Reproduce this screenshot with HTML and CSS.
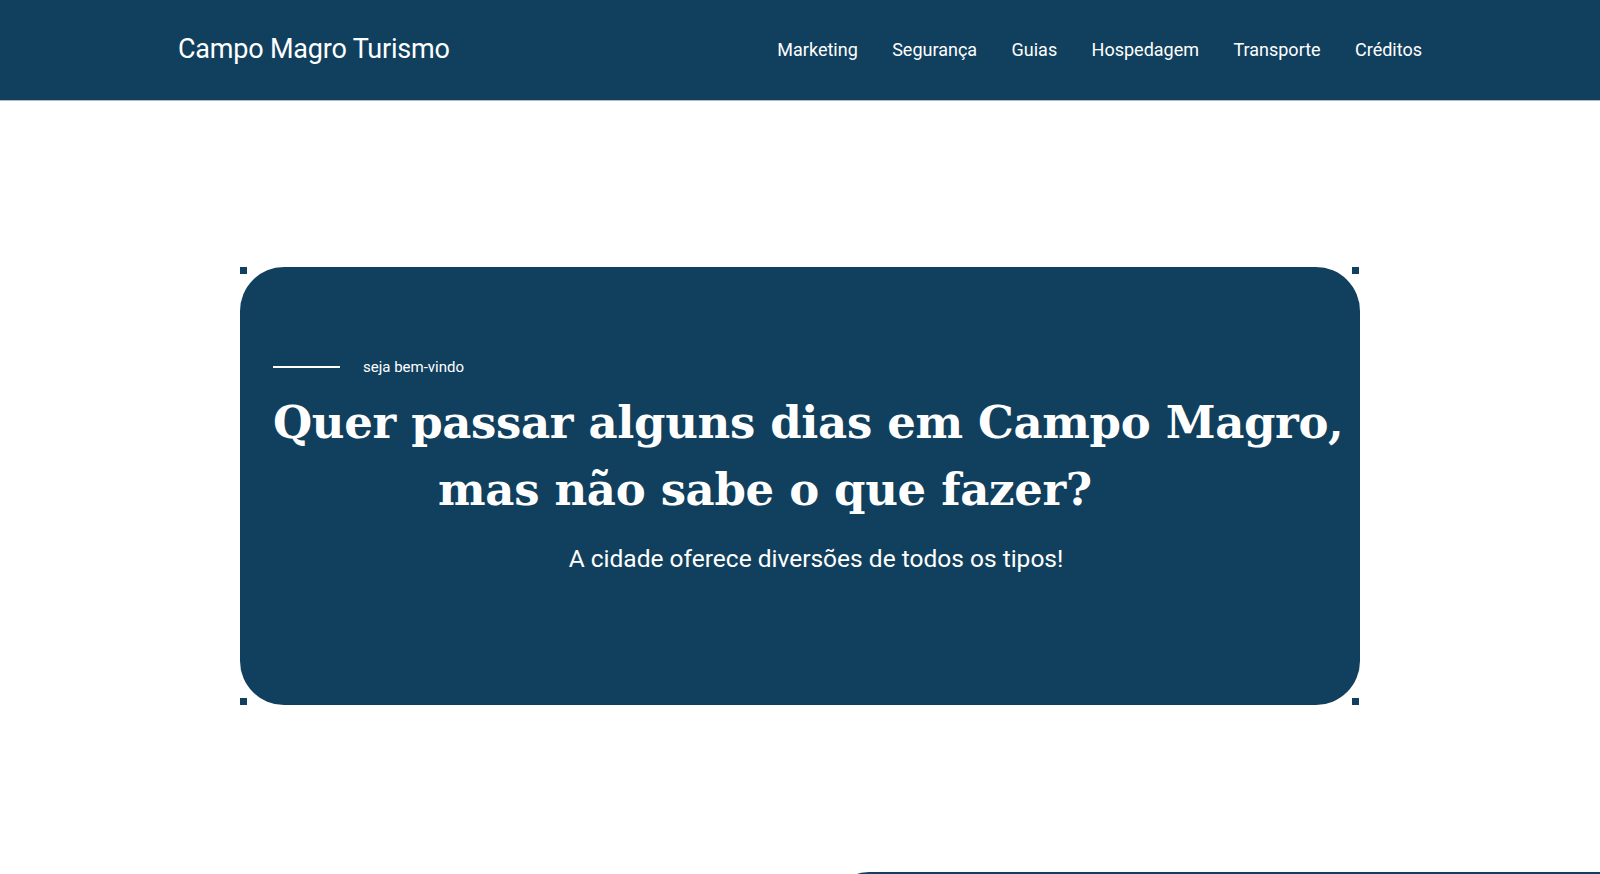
FILE: index.html
```html
<!DOCTYPE html>
<html lang="pt-BR">
<head>
<meta charset="utf-8">
<title>Campo Magro Turismo</title>
<link rel="stylesheet" href="styles.css">
</head>
<body>
<header class="site-header">
  <div class="header-inner">
    <a class="brand" href="#">Campo Magro Turismo</a>
    <nav class="main-nav">
      <a href="#">Marketing</a>
      <a href="#">Segurança</a>
      <a href="#">Guias</a>
      <a href="#">Hospedagem</a>
      <a href="#">Transporte</a>
      <a href="#">Créditos</a>
    </nav>
  </div>
</header>

<main>
  <section class="hero">
    <div class="hero-card">
      <span class="corner corner-tl"></span>
      <span class="corner corner-tr"></span>
      <span class="corner corner-bl"></span>
      <span class="corner corner-br"></span>
      <div class="eyebrow">
        <span class="eyebrow-line"></span>
        <span class="eyebrow-text">seja bem-vindo</span>
      </div>
      <h1 class="hero-title">
        <span class="title-line1">Quer passar alguns dias em Campo Magro,</span>
        <span class="title-line2">mas não sabe o que fazer?</span>
      </h1>
      <p class="hero-sub">A cidade oferece diversões de todos os tipos!</p>
    </div>
  </section>

  <section class="next-section">
    <div class="next-card"></div>
  </section>
</main>
</body>
</html>
```

FILE: styles.css
```css
* { box-sizing: border-box; }

html, body {
  margin: 0;
  padding: 0;
  background: #ffffff;
  font-family: Roboto, "Liberation Sans", Arial, sans-serif;
  color: #ffffff;
}

.site-header {
  background: #11405e;
  height: 100px;
  box-shadow: 0 1px 0 rgba(17, 64, 94, 0.35);
}

.header-inner {
  max-width: 1244px;
  height: 100%;
  margin: 0 auto;
  display: flex;
  align-items: center;
  justify-content: space-between;
  padding-bottom: 2px;
}

.brand {
  color: #ffffff;
  text-decoration: none;
  font-size: 27px;
  font-weight: 400;
  letter-spacing: -0.2px;
}

.main-nav {
  display: flex;
  gap: 34.4px;
}

.main-nav a {
  color: #ffffff;
  text-decoration: none;
  font-size: 18px;
}

.hero {
  padding-top: 167px;
  display: flex;
  justify-content: center;
}

.hero-card {
  position: relative;
  width: 1120px;
  height: 438px;
  background: #11405e;
  border-radius: 44px;
  padding: 90px 33px 0;
}

.corner {
  position: absolute;
  width: 7px;
  height: 7px;
  background: #11405e;
}
.corner-tl { top: 0; left: 0; }
.corner-tr { top: 0; right: 1px; }
.corner-bl { bottom: 0; left: 0; }
.corner-br { bottom: 0; right: 1px; }

.eyebrow {
  display: flex;
  align-items: center;
  gap: 23px;
  height: 20px;
}

.eyebrow-line {
  width: 67px;
  height: 2px;
  background: #ffffff;
}

.eyebrow-text {
  font-size: 15px;
}

.hero-title {
  margin: 12px 0 0;
  font-family: "DejaVu Serif", Georgia, serif;
  font-weight: 700;
  font-size: 45px;
  line-height: 67px;
  letter-spacing: -0.35px;
  text-align: center;
}

.title-line1 {
  display: block;
  text-align: left;
  white-space: nowrap;
}

.title-line2 {
  display: block;
  padding-right: 70px;
}

.hero-sub {
  margin: 21px 0 0;
  font-size: 24.5px;
  text-align: center;
  padding-left: 32px;
}

.next-section {
  padding-top: 167px;
  display: flex;
  justify-content: flex-end;
}

.next-card {
  width: 771px;
  height: 300px;
  background: #11405e;
  border-top-left-radius: 40px;
}
```
